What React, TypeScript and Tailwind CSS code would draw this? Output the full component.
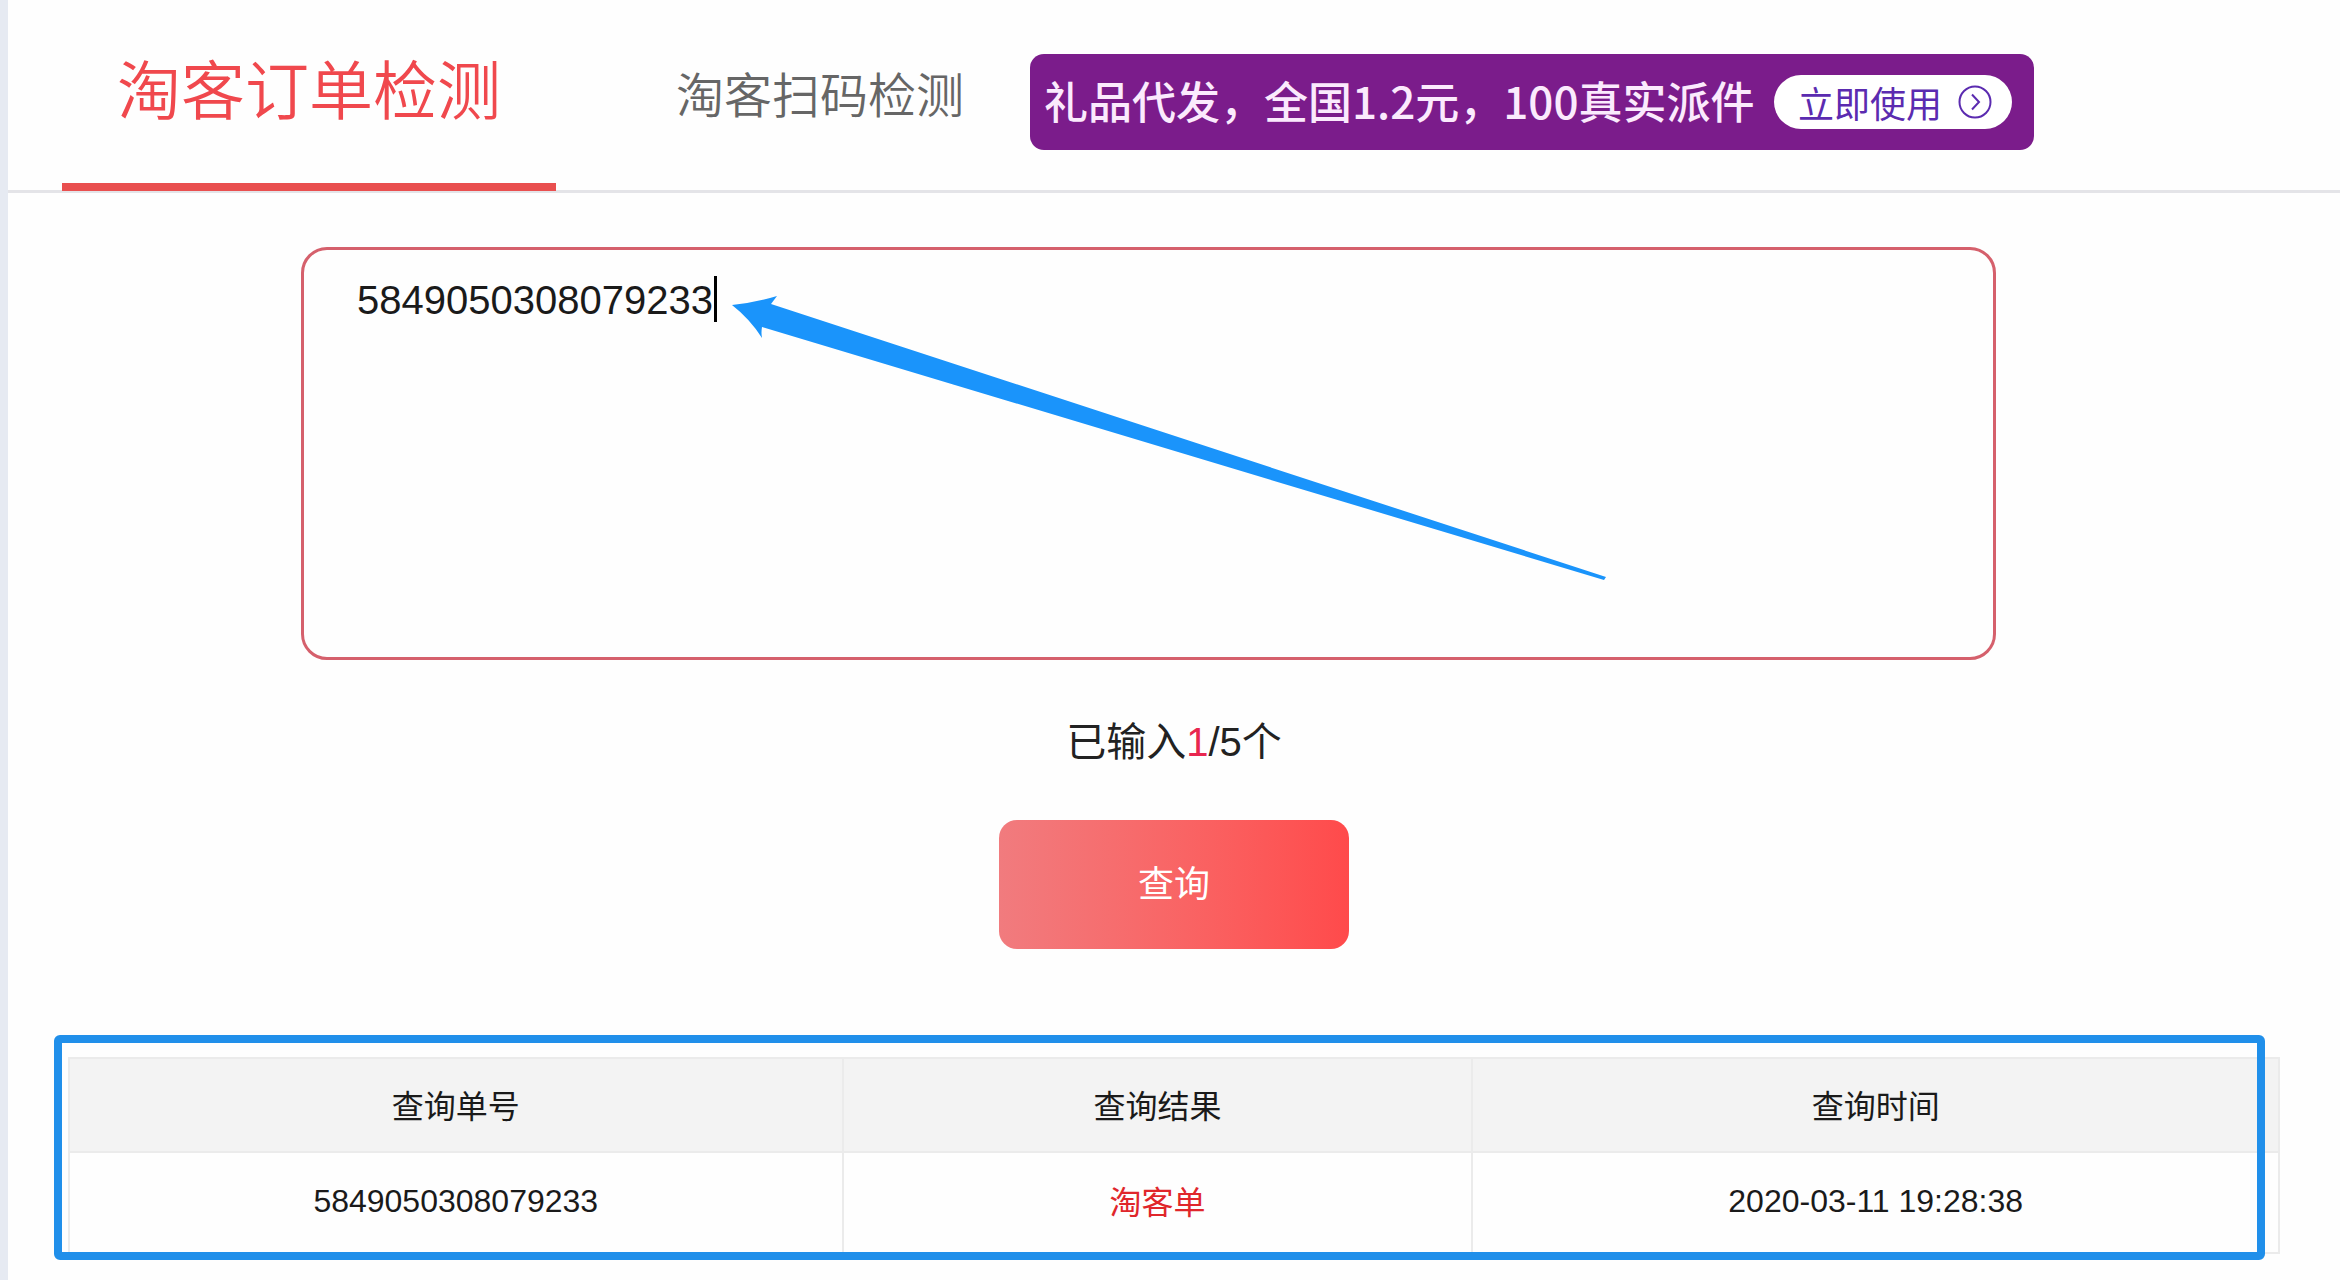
import React, { useState } from "react";

const MAX_ORDERS = 5;

const results = [
    { order: "5849050308079233", result: "淘客单", time: "2020-03-11 19:28:38" },
];

const Header = () => {
    return (
        <header className="flex items-start border-b-3 border-[#e4e4e8] pl-[54px]">
            <nav className="flex items-start">
                <a href="#order" className="-mb-[1px] w-[494px] border-b-8 border-[#e94f4f] pt-[44px] pb-[43px] text-center text-[64px] leading-[96px] font-[350] text-[#f0484d]">
                    淘客订单检测
                </a>
                <a href="#scan" className="ml-[120px] pt-[61px] text-5xl leading-[72px] font-[350] text-[#666]">
                    淘客扫码检测
                </a>
            </nav>

            {/* Promo banner */}
            <a href="#gift" className="mt-[54px] ml-[66px] flex h-24 w-[1004px] items-center justify-between rounded-[14px] bg-[#7b1c8b] pr-[22px] pl-[14px] font-['Noto_Sans_CJK_SC',sans-serif]">
                <span className="pb-1 text-[44px] leading-[64px] font-medium text-[#fbeafd]">礼品代发，全国1.2元，100真实派件</span>
                <span className="flex h-[54px] items-center gap-4 rounded-full bg-white pr-5 pl-6 text-4xl text-[#5b2bb0]">
                    立即使用
                    <svg width="34" height="34" viewBox="0 0 34 34" fill="none" stroke="currentColor" strokeWidth="2">
                        <circle cx="17" cy="17" r="15.5" />
                        <path d="M14 9.5l7 7.5-7 7.5" />
                    </svg>
                </span>
            </a>
        </header>
    );
};

const OrderForm = () => {
    const [value, setValue] = useState("5849050308079233");
    const count = value.split("\n").filter(Boolean).length;

    return (
        <form className="flex flex-col items-center pt-[54px]" onSubmit={(e) => e.preventDefault()}>
            <div className="relative w-full pr-[344px] pl-[293px]">
                <textarea
                    aria-label="订单号"
                    value={value}
                    onChange={(e) => setValue(e.target.value)}
                    className="block h-[413px] w-full resize-none rounded-[26px] border-3 border-[#d5606c] px-[53px] py-6 text-[40px] leading-[52px] text-[#1a1a1a] caret-transparent outline-none"
                />
                {/* Caret */}
                <span className="absolute top-[29px] left-[706px] h-[46px] w-[3px] bg-black"></span>
                {/* Arrow pointing at the order number */}
                <svg className="absolute top-[46px] left-[724px]" width="880" height="290" viewBox="0 0 880 290" fill="#1a94fb">
                    <path d="M0 12Q22 10 45 3L39 11L874 284L872 287L30 34Q29 40 30 45Q18 26 0 12Z" />
                </svg>
            </div>

            <p className="mt-[52px] text-[40px] leading-[60px] text-[#222]">
                已输入<span className="text-[#e8264f]">{count}</span>/{MAX_ORDERS}个
            </p>

            <button type="submit" className="mt-12 h-[129px] w-[350px] rounded-[18px] bg-linear-to-r from-[#f17b7e] to-[#ff4a4b] text-4xl text-white">
                查询
            </button>
        </form>
    );
};

const ResultTable = () => {
    return (
        <section className="relative mx-[60px] mt-[108px]">
            <table className="w-full table-fixed border-collapse text-center text-[32px] leading-[48px] text-[#1a1a1a]">
                <thead>
                    <tr className="h-[94px] bg-[#f3f3f3]">
                        <th className="w-[35%] border-2 border-[#ebebeb] pt-1 font-normal">查询单号</th>
                        <th className="w-[28.5%] border-2 border-[#ebebeb] pt-1 font-normal">查询结果</th>
                        <th className="border-2 border-[#ebebeb] pt-1 font-normal">查询时间</th>
                    </tr>
                </thead>
                <tbody>
                    {results.map((row) => (
                        <tr key={row.order} className="h-[101px]">
                            <td className="border-2 border-[#ebebeb] pb-1">{row.order}</td>
                            <td className="border-2 border-[#ebebeb] text-[#e0262b]">{row.result}</td>
                            <td className="border-2 border-[#ebebeb] pb-1">{row.time}</td>
                        </tr>
                    ))}
                </tbody>
            </table>
            {/* Highlight frame */}
            <div className="pointer-events-none absolute -top-[22px] right-[15px] -bottom-[6px] -left-[14px] rounded-md border-8 border-[#208fea]"></div>
        </section>
    );
};

const App = () => {
    return (
        <div className="min-h-screen border-l-8 border-[#e6eaf2] bg-[#fefefe] font-['Liberation_Sans','Noto_Sans_CJK_SC',sans-serif]">
            <Header />
            <main>
                <OrderForm />
                <ResultTable />
            </main>
        </div>
    );
};

export default App;
